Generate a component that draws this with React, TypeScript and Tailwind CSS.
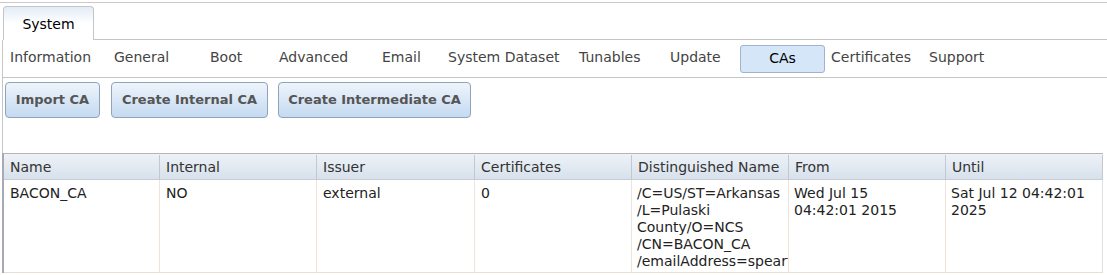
import React from "react";

const navItems = [
  { label: "Information", w: 104 },
  { label: "General", w: 96 },
  { label: "Boot", w: 69 },
  { label: "Advanced", w: 103 },
  { label: "Email", w: 66 },
  { label: "System Dataset", w: 131 },
  { label: "Tunables", w: 91 },
  { label: "Update", w: 70 },
];

const cols = ["Name", "Internal", "Issuer", "Certificates", "Distinguished Name", "From", "Until"];

export default function App() {
  const font = { fontFamily: '"DejaVu Sans", Verdana, sans-serif' };
  return (
    <div className="w-[1107px] h-[275px] bg-white overflow-hidden text-[13px] text-[#333]" style={font}>
      <div className="pt-[2px]">
        <div className="border-t border-[#c9c9c9]">
          {/* tab strip */}
          <div className="flex h-[37px] pt-[3px]">
            <div className="w-[3px] shrink-0" />
            <div className="w-[91px] shrink-0 rounded-t-[4px] border border-b-0 border-[#c5c5c5] bg-gradient-to-b from-[#e3ecf7] via-white to-white flex items-center justify-center text-black text-[14px] pt-[2px]">
              System
            </div>
            <div className="flex-1 border-b border-[#c5c5c5]" />
          </div>
          <div className="ml-[2px] border-l border-[#c5c5c5]">
            {/* sub nav */}
            <div className="flex items-center h-[38px] pb-[2px] pl-[7px] border-b border-[#c5c5c5] text-[14px] text-[#444]">
              {navItems.map((n) => (
                <div key={n.label} className="shrink-0 flex items-center" style={{ width: n.w }}>
                  {n.label}
                </div>
              ))}
              <div className="w-[85px] h-[28px] mt-[2px] shrink-0 rounded-[3px] border border-[#9fb4cc] bg-[#d4e6f8] flex items-center justify-center text-black">
                CAs
              </div>
              <div className="ml-[6px] w-[98px] shrink-0 flex items-center">Certificates</div>
              <div className="shrink-0 flex items-center">Support</div>
            </div>
            {/* buttons */}
            <div className="flex pl-[2px] pt-[4px] h-[75px] items-start">
              <div className="w-[95px] h-[36px] rounded-[4px] border border-[#8ea4bd] bg-gradient-to-b from-[#eef4fb] to-[#c5daf1] flex items-center justify-center font-bold text-[13px] text-[#555]">
                Import CA
              </div>
              <div className="ml-[11px] w-[157px] h-[36px] rounded-[4px] border border-[#8ea4bd] bg-gradient-to-b from-[#eef4fb] to-[#c5daf1] flex items-center justify-center font-bold text-[13px] text-[#555]">
                Create Internal CA
              </div>
              <div className="ml-[10px] w-[193px] h-[36px] rounded-[4px] border border-[#8ea4bd] bg-gradient-to-b from-[#eef4fb] to-[#c5daf1] flex items-center justify-center font-bold text-[13px] text-[#555]">
                Create Intermediate CA
              </div>
            </div>
            {/* table */}
            <div className="border-l-2 border-[#a9a9b5] -ml-[1px] w-[1101px] border-t border-t-[#b5b5b5]">
              <div className="grid grid-cols-[156px_157px_158px_157px_157px_157px_157px] h-[26px] pt-[1px] bg-gradient-to-b from-[#eef2f7] to-[#d7e1ec] border-b border-[#c8cdd3] text-[14px] text-[#333]">
                {cols.map((c) => (
                  <div key={c} className="flex items-center pl-[6px] border-r border-[#c3c8ce]">
                    {c}
                  </div>
                ))}
              </div>
              <div className="grid grid-cols-[156px_157px_158px_157px_157px_157px_157px] h-[93px] border-b border-[#e8ded2] text-[14px] text-[#222] leading-[17px]">
                <div className="border-r border-[#eee3d8] pl-[6px] pt-[5px]">BACON_CA</div>
                <div className="border-r border-[#eee3d8] pl-[6px] pt-[5px]">NO</div>
                <div className="border-r border-[#eee3d8] pl-[6px] pt-[5px]">external</div>
                <div className="border-r border-[#eee3d8] pl-[6px] pt-[5px]">0</div>
                <div className="border-r border-[#eee3d8] pl-[5px] pt-[5px] overflow-hidden whitespace-nowrap">
                  /C=US/ST=Arkansas
                  <br />/L=Pulaski
                  <br />County/O=NCS
                  <br />/CN=BACON_CA
                  <br />/emailAddress=spearfish@example.com
                </div>
                <div className="border-r border-[#eee3d8] pl-[5px] pt-[5px]">
                  Wed Jul 15
                  <br />04:42:01 2015
                </div>
                <div className="border-r border-[#e0e0e0] pl-[5px] pt-[5px]">
                  Sat Jul 12 04:42:01
                  <br />2025
                </div>
              </div>
            </div>
          </div>
        </div>
      </div>
    </div>
  );
}
